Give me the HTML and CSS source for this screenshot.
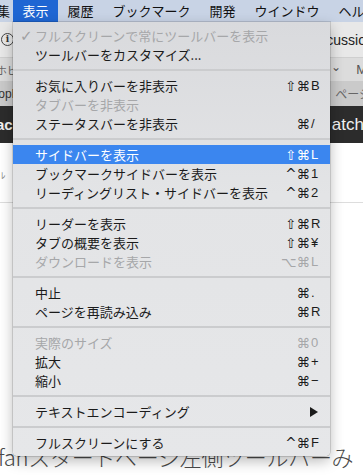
FILE: index.html
```html
<!DOCTYPE html>
<html lang="ja">
<head>
    <meta charset="UTF-8">
    <title>表示メニュー</title>
    <link rel="stylesheet" href="styles.css">
</head>
<body>
    <div class="screen">
        <div class="menubar">
            <span class="mb-item first">編集</span>
            <span class="mb-item active">表示</span>
            <span class="mb-item">履歴</span>
            <span class="mb-item">ブックマーク</span>
            <span class="mb-item">開発</span>
            <span class="mb-item">ウインドウ</span>
            <span class="mb-item">ヘルプ</span>
        </div>

        <div class="browser">
            <div class="toolbar">
                <span class="info-icon">i</span>
                <span class="address">discussio</span>
            </div>
            <div class="favbar">
                <span>ホビー</span>
                <span class="fav-right"><span class="chev">⌄</span> M</span>
            </div>
            <div class="tabbar">
                <span>people</span>
                <span class="tab-right">、ページ</span>
            </div>
            <div class="darkbar">
                <span class="dark-left">ac</span>
                <span class="dark-right">atch</span>
            </div>
            <div class="page">
                <div class="tick">ﾚ</div>
                <hr class="rule">
                <div class="big-text">fanスタートページ左側ツールバーみ</div>
            </div>
        </div>

        <div class="menu">
            <div class="item disabled"><span class="check">✓</span><span class="label">フルスクリーンで常にツールバーを表示</span></div>
            <div class="item"><span class="check"></span><span class="label">ツールバーをカスタマイズ...</span></div>
            <div class="sep"></div>
            <div class="item"><span class="check"></span><span class="label">お気に入りバーを非表示</span><span class="mods">⇧⌘</span><span class="key">B</span></div>
            <div class="item disabled"><span class="check"></span><span class="label">タブバーを非表示</span></div>
            <div class="item"><span class="check"></span><span class="label">ステータスバーを非表示</span><span class="mods">⌘</span><span class="key">/</span></div>
            <div class="sep"></div>
            <div class="item selected"><span class="check"></span><span class="label">サイドバーを表示</span><span class="mods">⇧⌘</span><span class="key">L</span></div>
            <div class="item"><span class="check"></span><span class="label">ブックマークサイドバーを表示</span><span class="mods">^⌘</span><span class="key">1</span></div>
            <div class="item"><span class="check"></span><span class="label">リーディングリスト・サイドバーを表示</span><span class="mods">^⌘</span><span class="key">2</span></div>
            <div class="sep"></div>
            <div class="item"><span class="check"></span><span class="label">リーダーを表示</span><span class="mods">⇧⌘</span><span class="key">R</span></div>
            <div class="item"><span class="check"></span><span class="label">タブの概要を表示</span><span class="mods">⇧⌘</span><span class="key">¥</span></div>
            <div class="item disabled"><span class="check"></span><span class="label">ダウンロードを表示</span><span class="mods">⌥⌘</span><span class="key">L</span></div>
            <div class="sep"></div>
            <div class="item"><span class="check"></span><span class="label">中止</span><span class="mods">⌘</span><span class="key">.</span></div>
            <div class="item"><span class="check"></span><span class="label">ページを再読み込み</span><span class="mods">⌘</span><span class="key">R</span></div>
            <div class="sep"></div>
            <div class="item disabled"><span class="check"></span><span class="label">実際のサイズ</span><span class="mods">⌘</span><span class="key">0</span></div>
            <div class="item"><span class="check"></span><span class="label">拡大</span><span class="mods">⌘</span><span class="key">+</span></div>
            <div class="item"><span class="check"></span><span class="label">縮小</span><span class="mods">⌘</span><span class="key">−</span></div>
            <div class="sep"></div>
            <div class="item"><span class="check"></span><span class="label">テキストエンコーディング</span><span class="key"><span class="arrow"></span></span></div>
            <div class="sep"></div>
            <div class="item"><span class="check"></span><span class="label">フルスクリーンにする</span><span class="mods">^⌘</span><span class="key">F</span></div>
        </div>
    </div>
</body>
</html>
```

FILE: styles.css
```css
html, body {
    margin: 0;
    padding: 0;
    width: 363px;
    height: 475px;
    overflow: hidden;
    background: #fff;
    font-family: "Noto Sans CJK JP", "Noto Sans", sans-serif;
}
.screen {
    position: relative;
    width: 363px;
    height: 475px;
    overflow: hidden;
}

/* top menu bar */
.menubar {
    height: 22px;
    display: flex;
    align-items: center;
    background: #c8d3e5;
    font-size: 13px;
    color: #111;
    white-space: nowrap;
}
.mb-item {
    height: 22px;
    line-height: 22px;
    padding: 0 9.5px;
}
.mb-item.first {
    margin-left: -16px;
    padding: 0 3px 0 0;
}
.mb-item.active {
    background: #1f66d3;
    color: #fff;
}

/* browser behind the menu */
.browser {
    height: 453px;
    display: flex;
    flex-direction: column;
}
.toolbar {
    height: 35px;
    background: #e8e8e8;
    display: flex;
    align-items: center;
    justify-content: space-between;
    padding: 0 0 0 1px;
    border-bottom: 1px solid #cfcfcf;
}
.info-icon {
    width: 11px;
    height: 11px;
    border: 1.3px solid #444;
    border-radius: 50%;
    font: bold 9px/11px "DejaVu Serif", serif;
    text-align: center;
    color: #333;
}
.address {
    font: 14px "Liberation Sans", sans-serif;
    color: #222;
    margin-right: -3px;
}
.favbar {
    height: 23px;
    background: #dcdcdc;
    display: flex;
    align-items: center;
    justify-content: space-between;
    font-size: 11px;
    color: #666;
    white-space: nowrap;
}
.favbar > span:first-child {
    margin-left: -4px;
}
.fav-right {
    margin-right: -4px;
    font: 13px "Liberation Sans", sans-serif;
    color: #555;
}
.chev {
    display: inline-block;
    margin-right: 12px;
    font-size: 12px;
    transform: translateY(-3px);
}
.tabbar {
    height: 25px;
    background: #cacaca;
    display: flex;
    align-items: center;
    justify-content: space-between;
    font: 12px "Liberation Sans", "Noto Sans CJK JP", sans-serif;
    color: #333;
    white-space: nowrap;
}
.tabbar > span:first-child {
    margin-left: -15px;
}
.tab-right {
    margin-right: -8px;
    color: #666;
}
.darkbar {
    height: 37px;
    background: #2c2c2c;
    display: flex;
    align-items: center;
    justify-content: space-between;
    color: #f2f2f2;
    white-space: nowrap;
}
.dark-left {
    font: bold 15px "Liberation Sans", sans-serif;
    margin-left: -4px;
}
.dark-right {
    font: 17px "Liberation Sans", sans-serif;
    margin-right: -1px;
}
.page {
    flex: 1;
    background: #fff;
    display: flex;
    flex-direction: column;
}
.tick {
    margin: 26px 0 0 1px;
    font-size: 9px;
    color: #777;
}
.rule {
    margin: 20px 0 0;
    border: 0;
    border-top: 1px solid #dddddd;
}
.big-text {
    margin: 240px 0 0 -2px;
    font-size: 22px;
    font-weight: 300;
    line-height: 26px;
    color: #4a4a4a;
    white-space: nowrap;
    letter-spacing: -0.3px;
}

/* dropdown menu */
.menu {
    position: absolute;
    left: 13px;
    top: 22px;
    width: 317px;
    padding: 4px 0;
    background: linear-gradient(#d9dadd, #e3e4e6 40%, #e6e7e9);
    border-radius: 0 0 5px 5px;
    box-shadow: 0 0 0 1px rgba(0,0,0,0.12), 0 5px 14px rgba(0,0,0,0.28);
    font-size: 13px;
    color: #1b1b1b;
}
.item {
    height: 19px;
    display: flex;
    align-items: center;
    padding: 0 10px 0 7px;
    white-space: nowrap;
}
.item.disabled {
    color: #a6a7a9;
}
.item.selected {
    background: #3b86ef;
    color: #fff;
}
.check {
    width: 15px;
    font: bold 15px "DejaVu Sans", sans-serif;
    color: #a0a0a2;
}
.label {
    flex: 1;
}
.mods {
    font: 13.5px "DejaVu Sans", sans-serif;
    text-align: right;
}
.key {
    width: 9px;
    padding-left: 1px;
    font: 13px "Liberation Sans", sans-serif;
}
.arrow {
    display: block;
    width: 0;
    height: 0;
    border-left: 8px solid #1b1b1b;
    border-top: 5px solid transparent;
    border-bottom: 5px solid transparent;
    margin-left: -1px;
}
.sep {
    height: 2px;
    margin: 5px 0;
    background: #cbccce;
}
```
